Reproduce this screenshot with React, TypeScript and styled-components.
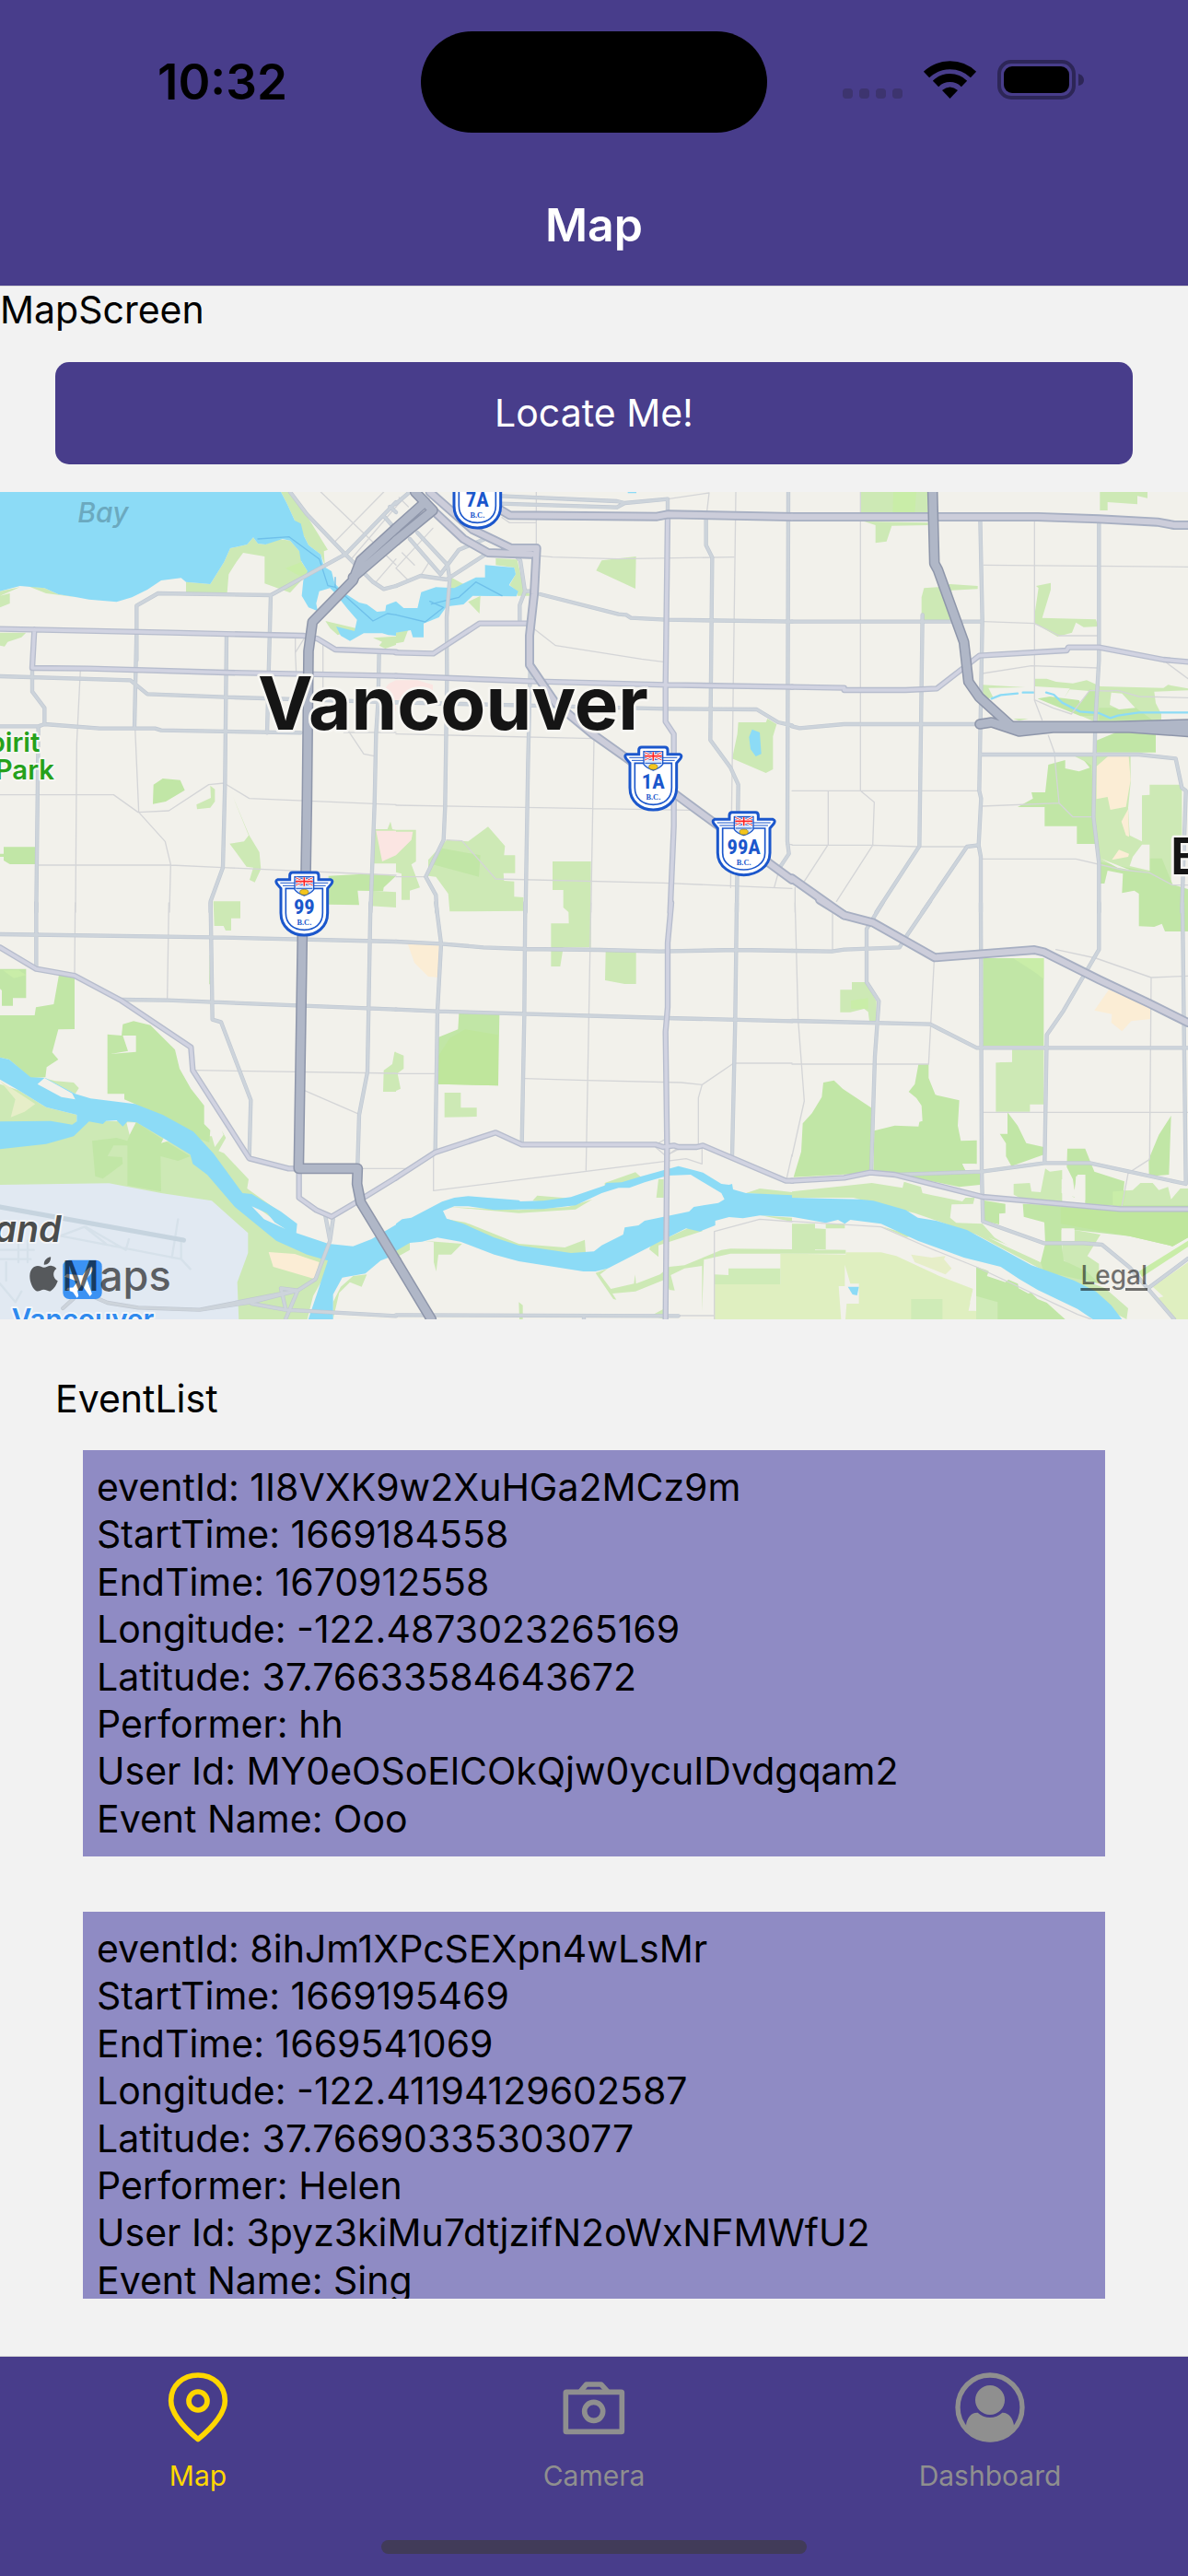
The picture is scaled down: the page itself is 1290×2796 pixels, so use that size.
import React from 'react';
import styled, { createGlobalStyle } from 'styled-components';

const color = {
  primary: '#483d8b',
  background: '#f2f2f2',
  card: '#8f8bc4',
  active: '#ffd700',
  inactive: '#8f8f8f',
  hairline: '#d8d8d8',
};

const GlobalStyle = createGlobalStyle`
  *, *::before, *::after { box-sizing: border-box; }
  html, body { margin: 0; padding: 0; background: ${color.background}; }
  body { font-family: Inter, Roboto, "Liberation Sans", sans-serif; color: #000; }
  h1, h2, p, dl, dd, dt, ul { margin: 0; padding: 0; font-weight: 400; }
`;

/* ---------- shell ---------- */

const Screen = styled.div`
  display: flex;
  flex-direction: column;
  height: 100vh;
  min-height: 2000px;
  overflow: hidden;
  font-size: 41px;
  line-height: 51px;
`;

const Header = styled.header`
  background: ${color.primary};
  border-bottom: 1px solid ${color.hairline};
`;

const StatusBar = styled.div`
  display: grid;
  grid-template-columns: 1fr auto 1fr;
  align-items: center;
  height: 177px;
  padding: 34px 112px 33px;
`;

const Clock = styled.time`
  padding-left: 59px;
  font-size: 53px;
  font-weight: 600;
`;

const Island = styled.div`
  width: 376px;
  height: 110px;
  border-radius: 55px;
  background: #000;
`;

const StatusIcons = styled.svg`
  justify-self: end;
  width: 263px;
  height: 44px;
  margin-bottom: 4px;
`;

const TitleBar = styled.div`
  display: flex;
  align-items: center;
  justify-content: center;
  height: 133px;
  color: #fff;
`;

const Title = styled.h1`
  && { font-size: 50px; font-weight: 600; line-height: 60px; }
`;

const Main = styled.main`
  display: flex;
  flex: 1;
  flex-direction: column;
  min-height: 0;
`;

const LocateButton = styled.button`
  margin: 31px 60px 30px;
  padding: 30px;
  border: 0;
  border-radius: 15px;
  background: ${color.primary};
  color: #fff;
  font: inherit;
`;

/* ---------- map ---------- */

const MapFrame = styled.section`
  position: relative;
  width: 100%;
  aspect-ratio: 1290 / 898;
  flex-shrink: 0;
  overflow: hidden;
`;

const MapDrawing = styled.svg`
  display: block;
  width: 100%;
  height: 100%;
`;

const Attribution = styled.div`
  position: absolute;
  right: 44px;
  bottom: 22px;
  left: 32px;
  display: flex;
  align-items: center;
  justify-content: space-between;
  color: rgba(0, 0, 0, 0.62);
`;

const MapsBrand = styled.span`
  display: flex;
  align-items: center;
  gap: 4px;
  font-size: 45px;
  font-weight: 500;
`;

const AppleMark = styled.svg`
  width: 31px;
  height: 38px;
  margin-bottom: 4px;
`;

const LegalLink = styled.a`
  color: rgba(0, 0, 0, 0.55);
  font-size: 28px;
  font-weight: 500;
  text-decoration: underline;
  text-decoration-thickness: 3px;
  text-underline-offset: 4px;
`;

type TileKey = 'a' | 'b' | 'c' | 'd' | 'e' | 'f';

const tileOrigin: Record<TileKey, [number, number]> = {
  a: [0, 0],
  b: [1290, 0],
  c: [2580, 0],
  d: [0, 1350],
  e: [1290, 1350],
  f: [2580, 1350],
};

type Shapes = Partial<Record<TileKey, string>>;

const lightGreen: Shapes = {
  a: 'M825,160 L840,180 L865,183 L905,165 L945,170 L980,210 L982,240 L1005,275 L945,340 L862,310 L862,222 L792,210 L770,240 L745,280 L740,340 L606,340 L606,305 L685,312 L730,240 L750,195 L805,183Z M915,12 L945,12 L1000,90 L1068,200 L1055,205 L1058,250 L1045,215 L1005,185 L990,155 L975,130 L960,105 L935,50Z M0,335 L65,322 L0,350Z M0,350 L32,342 V375 L0,388Z M90,318 L145,325 L190,345 L250,355 L150,342Z M0,470 L85,470 L70,485 L25,500 L15,515 L0,512Z M1060,432 L1158,455 V468 L1130,468 L1100,478 L1075,455Z M1215,487 L1290,482 V510 L1255,522 L1235,512 L1245,500Z M640,1030 L687,1008 L685,968 L700,980 V1020 L685,1040 L642,1045Z M757,1000 L812,1130 L845,1185 L850,1240 L830,1283 L813,1275 L825,1235 L803,1232 L748,1157 L795,1150 L810,1130Z M1220,1110 L1262,1110 L1272,1085 L1278,1110 L1290,1112 V1222 H1215Z M695,1345 H783 V1400 H753 V1440 H735 L728,1425 H698Z M1205,1310 L1290,1315 V1365 L1205,1360Z',
  b: 'M325,228 L395,232 L410,300 L438,350 H395 V335 L370,315 L390,280 L385,258 L325,250Z M180,290 L220,312 L180,335Z M235,370 L275,350 L272,408Z M0,470 L40,460 L25,500 L0,505Z M652,268 L670,235 L782,222 L780,327Z M1115,762 H1205 L1210,750 L1240,768 L1228,808 V915 L1205,927 L1095,880 L1112,800Z M235,1150 L300,1102 L355,1165 L352,1195 H388 V1253 H350 L352,1278 L385,1280 V1330 L415,1332 V1376 L175,1378 L170,1320 L130,1265 L105,1262 L105,1210 L165,1145Z M510,1215 H635 V1495 H545 L535,1557 H505 V1417 H563 L562,1380 L545,1365 V1308 H510Z M0,1112 H65 V1215 L50,1225 L78,1300 L45,1310 V1340 H18 V1255 L0,1250Z',
  c: 'M225,12 H443 V80 H223Z M235,108 L443,112 V120 L325,122 L308,173 L272,178 V120Z M1003,12 H1158 V32 L1125,25 V52 L1028,45 V72 H1003Z M430,325 L475,322 L515,312 L605,318 V328 L520,332 L520,430 H422 V355Z M795,318 L843,308 V330 L815,422 L990,427 L998,450 L950,452 L925,437 L912,470 L865,483 L792,440 V400 L803,325Z M792,620 L830,620 L860,630 L915,635 L960,625 L1005,645 L1210,650 L1225,640 L1290,652 V658 L1180,662 L1185,700 L1203,735 V760 H985 L940,740 L970,660 L905,655 L885,685 L905,652 L792,645Z M620,640 L760,648 L640,650 L655,680 L620,690Z M920,872 H1103 V960 L1095,1040 L1100,1130 L1140,1150 V1000 L1165,998 V965 H1270 V1140 L1235,1140 V1290 L1000,1220 L975,1080 V900Z M720,750 H770 L740,757Z',
  d: 'M0,590 L60,610 L150,665 L250,690 V720 L290,710 L440,712 L620,780 L680,880 L780,1000 L900,1090 L1075,1140 L1065,1200 L1020,1280 L1000,1360 H0Z M640,760 L690,760 L700,795 L728,755 L722,740 L736,765 L712,808 L730,815 L810,900 L805,930 L965,1045 L960,1080 L780,950Z M1085,1356 V1300 L1110,1250 L1150,1215 L1195,1210 L1178,1250 L1140,1235 L1105,1270Z M1250,545 L1278,525 L1285,485 H1290 V615 H1248Z M683,170 h6 V265 h-8z M150,572 L180,580 L240,585 L257,603 L245,622Z',
  e: 'M683,158 H782 V264 H745 L681,252Z M158,618 H211 V667 H263 V696 L158,698Z M0,487 L25,497 V540 L5,555 L15,605 L0,612Z M680,912 L780,877 L800,895 L680,930Z M445,970 L460,953 L570,962 L500,975Z M170,990 L400,1000 L560,990 L640,965 L585,998 L400,1010Z M165,1030 L225,1040 L400,1110 L550,1122 L615,1097 L618,1140 L400,1140Z M848,960 L855,900 H872 V960Z M1140,945 L1185,930 L1290,942 V955Z M90,1100 L215,1110 L180,1145 H138 L131,1200 L123,1170 V1105Z M0,1130 L45,1105 V1130 L0,1155Z M830,1115 L950,1060 L1000,1068 L855,1115 V1153 L825,1128Z M650,1205 L690,1190 L665,1210 L700,1257 L775,1240 L779,1210 L782,1240 L860,1210 L890,1185 L940,1180 L1060,1130 L1090,1126 L1290,1128 V1142 H1090 L1003,1162 L997,1330 V1182 L940,1190 L895,1212 L908,1262 L890,1260 L880,1225 L780,1265 L705,1272 L718,1292 L708,1290Z M1190,1018 L1290,1025 V1038Z M400,1300 L413,1310 V1356 H402Z M830,1345 L880,1318 V1356Z',
  f: 'M664,520 L717,517 V478 H820 V656 H775 V680 H664Z M157,283 H195 V258 H240 L275,320 V385 H252 L248,355 L235,345 L190,356 H157Z M722,915 L775,912 L780,940 L810,942 L825,865 L840,875 L880,870 V985 L752,965 L722,950Z M1045,940 L1110,935 L1135,912 H1175 L1195,935 L1225,925 L1235,965 L1265,930 H1290 V990 H1045Z M0,940 L260,912 L360,928 L365,908 L420,925 L425,945 L555,972 L565,960 L595,960 L590,980 L520,982 L515,1025 L535,1042 L620,1045 L660,1090 L720,1125 L810,1170 L940,1225 L1020,1255 L1095,1320 L1090,1356 L1060,1340 L900,1240 L600,1080 L400,1010 L200,960 L0,960Z M0,1045 L75,1045 V1128 L175,1130 V1142 H0Z M75,1060 L110,1062 V1130 H75Z M110,1045 L172,1045 V1060 H110Z M290,1053 L400,1085 L372,1088Z M920,1065 L1005,1080 L962,1150 L1000,1175 V1240 L880,1160 V1100 H920Z',
};

const midGreen: Shapes = {
  a: 'M12,1168 H115 V1224 H32 L12,1212 V1200 H0 V1190 H12Z M500,965 L530,945 L587,950 L602,983 L540,1020 L498,1028Z M1070,1262 L1210,1255 L1290,1262 L1250,1300 L1248,1312 L1165,1310 L1170,1357 L1070,1355Z',
  b: 'M120,1225 L150,1172 L275,1195 L270,1265Z',
  c: 'M1055,795 H1185 V860 H990 V822Z M835,900 L890,885 V912 L935,922 L970,910 L950,885 L975,900 L985,1070 L995,1158 H928 V1100 H823 V1038 H735 L785,1010 L780,990 H825Z M1000,1215 L1165,1250 V1205 H1205 L1240,1290 L1290,1305 V1443 H1265 L1215,1443 L1205,1418 L1180,1428 L1130,1426 V1320 L1115,1310 L1075,1318 L1078,1255 L1028,1245 L1018,1287 H1005Z M940,700 L970,655 L995,660 V740 L940,742 L800,685 L840,678 L935,690Z M1000,715 L1120,715 L1175,755 H1000Z',
  d: 'M0,366 H113 L117,340 L175,330 L192,235 H243 V411 L190,412 L170,487 L190,510 L152,535 L148,568 L100,570 L30,510 L0,503Z M0,215 H85 V310 H42 V335 H6 V285 L0,280Z M400,395 L435,385 L490,398 L570,478 L585,540 L622,605 L665,660 V720 L685,740 L682,780 L640,765 L440,655 L405,640 V622 H350 V428 L396,432Z M300,775 L380,765 L415,775 L440,712 L530,770 L620,825 L580,840 L523,825 L525,940 L415,920 V790 L370,790 L350,825 L398,828 L400,850 L335,898 L310,890Z',
  e: 'M205,360 H337 L333,595 L137,590 V438 L202,412Z',
  f: 'M622,180 H820 V465 H622Z M102,585 L137,578 L165,605 L260,668 L255,880 L5,893 L30,810 L35,718 L65,685 L97,632Z M412,525 H445 V570 L467,625 L545,643 L540,725 L550,775 L602,773 V850 H555 L565,870 L612,880 V918 L545,925 L350,885 L265,880 L268,742 L335,725 L412,728 L415,713 L425,710 L422,660 L405,635 L380,615 L400,590Z M702,682 L735,725 L763,782 L820,795 V820 L715,857 L697,825 V783 L677,752 H702Z M1235,693 L1228,885 L1163,890 L1162,835 L1195,755Z M897,800 H955 L985,875 L1083,907 L1075,985 L955,990 V885 L925,890 L920,960 L878,930 V900 H915 L895,860Z M752,980 L870,985 H1290 V1090 L1240,1118 L1100,1085 L920,1065 H878 V1110 L885,1165 L960,1200 L1000,1240 L820,1200 L810,1170 L825,1110 L822,1040 L755,1022Z M622,968 L695,980 V1010 L675,1012 V1047 L622,1035Z M600,1185 L630,1195 L760,1250 L800,1290 L830,1302 L890,1356 H600Z',
};

const deepGreen: Shapes = {
  e: 'M137,500 L175,440 L225,412 L333,430 V595 L137,590Z',
  f: 'M875,992 H1290 V1090 L1240,1118 L1100,1085 L875,1045Z',
};

const brightGreen: Shapes = {
  a: 'M930,260 L982,240 L1005,275 L985,290Z',
  c: 'M330,12 H405 L400,78 H328Z',
  d: 'M10,220 L60,218 L85,235 L45,245Z',
  f: 'M192,318 L248,310 L248,345 L192,345Z M1045,940 L1090,937 L1080,985 H1045Z M1130,1200 L1290,1100 V1120 L1140,1218Z M720,180 H820 V248 L790,225Z',
};

const field: Shapes = {
  e: 'M1038,1242 H1252 V1142 H1290 V1360 H1038Z',
  f: 'M0,1142 L175,1145 V1138 H290 L340,1150 L480,1215 L590,1257 L580,1300 L600,1330 V1356 H0Z M1290,1170 V1356 H1250 L1180,1290 L1210,1282 L1175,1250Z',
};

const fieldPatch: Shapes = {
  e: 'M1038,1210 L1083,1212 V1190 H1252 V1242 H1038Z',
  f: 'M388,1290 H490 V1356 H388Z M600,1280 L670,1300 V1356 H600Z',
};

const clearing: Shapes = {
  c: 'M1100,1230 L1110,1200 L1140,1160 H1165 V1245Z M1040,665 L1075,668 L1118,715 L1065,720 L1035,705Z M1005,1205 L1100,1243 L1060,1235Z',
  d: 'M400,432 H443 V485 L360,492 L417,482Z M412,715 H443 L422,755Z M535,762 L550,775 L525,782Z',
  f: 'M172,1178 L190,1240 H218 V1305 H178 L174,1356 H160 L152,1248 H172Z M878,900 H915 L920,935 L930,885 H955 V968 L878,945Z M590,1257 L600,1260 V1328 H575Z M645,1190 L715,1218 L695,1235 L635,1215Z M735,1232 L795,1262 L770,1272 L738,1255Z M640,1090 L810,1155 V1170 L700,1120Z M555,850 H597 V868 L565,870Z M640,520 L664,520 L664,480 H717 V518Z M878,1060 H920 V1100 H878Z',
};

const sand: Shapes = {
  c: 'M992,905 L1030,872 H1097 L1103,950 L1088,1037 L1037,1047 L1028,1005 L992,1012Z M1073,1085 L1095,1045 L1098,1135 L1088,1130Z M1042,1210 L1065,1177 L1098,1190 L1095,1200Z',
  d: 'M875,1137 L960,1143 L1040,1170 L1025,1225 L890,1185Z',
  e: 'M38,133 H140 V243 L105,240 L60,195Z',
  f: 'M985,350 L1032,283 L1170,340 V378 L1105,385 L1075,418 L1040,390 L1042,362Z',
};

const scrub: Shapes = {
  d: 'M0,580 L50,640 L35,698 L80,680 L115,655Z',
  f: 'M388,1145 L455,1155 L500,1150 L495,1160 L520,1190 L500,1210 L400,1170Z',
};

const hospital: Shapes = {
  a: 'M1225,1115 H1290 V1195 L1245,1215Z M1290,625 L1268,635 L1252,655 L1275,725 H1290Z',
  b: 'M0,1118 H55 L50,1145 L0,1195Z M0,625 H70 L120,640 V680 L0,690Z',
};

const airport: Shapes = {
  d: 'M0,918 L355,913 L525,945 L690,970 L808,1075 V1140 L773,1235 L778,1360 H0Z',
};

const water: Shapes = {
  a: 'M0,12 L915,12 L935,50 L960,105 L980,115 L990,155 L1005,185 L1045,215 L1055,255 L1080,270 L1090,310 L1120,340 L1170,372 L1195,378 L1228,402 L1255,400 L1258,380 L1290,368 V480 L1265,478 L1245,472 L1185,472 L1140,497 L1110,480 L1095,450 L1155,465 L1163,428 L1130,390 L1090,340 L1075,325 L1040,335 L1030,375 L1035,400 L1005,388 L983,350 L988,300 L1002,270 L980,235 L975,205 L945,170 L920,165 L865,183 L840,180 L825,160 L805,183 L750,195 L730,240 L685,312 L606,305 L590,292 L525,300 L480,330 L430,355 L380,370 L290,362 L250,355 L190,345 L145,325 L65,318 L0,335Z',
  b: 'M0,368 L25,390 L70,390 L82,338 L130,322 L190,325 L220,310 L260,290 L290,290 V250 L385,258 L390,280 L368,315 L398,335 L392,352 L250,350 L220,378 L165,385 L140,420 L90,440 V485 H55 L48,462 L0,470Z M755,12 h28 v4 h-28Z M1160,785 L1185,795 L1190,865 L1172,873 L1155,850 L1150,810Z',
  d: 'M0,503 L30,510 L100,568 L148,570 L245,622 L295,637 L440,655 L530,690 L630,745 L695,815 L790,945 L820,948 L915,1005 L968,1045 L965,1075 L1070,1110 L1150,1118 L1210,1095 L1290,1048 V1145 L1240,1165 L1190,1207 L1115,1220 L1085,1275 V1360 H1003 L1030,1280 L1068,1165 L1000,1145 L900,1100 L765,990 L675,885 L628,850 L620,820 L530,765 L445,715 L415,712 L400,728 L380,708 L345,710 L335,720 L290,712 L240,760 L150,785 L0,802 V712 L165,710 L235,722 L250,712 V690 L150,665 L60,610 L0,575Z M122,590 L145,570 L235,620 L245,640 L200,632Z M820,988 L870,1010 L895,1040 L930,1062 L860,1030Z',
  e: 'M0,1045 L20,1030 L50,1025 L150,973 L190,960 L235,955 L400,968 L405,972 L480,970 L570,958 L680,920 L685,912 L735,910 L800,890 L920,857 L1000,878 L1060,915 L1085,918 L1095,915 L1098,933 L1140,945 L1290,952 V1022 L1185,1018 L1130,1027 L1085,1023 L1040,1035 V1050 L990,1070 L945,1060 L885,1090 L830,1118 L690,1190 L650,1200 H610 L400,1167 L320,1145 L210,1103 L135,1090 L85,1103 L45,1107 L0,1133Z M153,1003 L190,988 L235,988 L320,1000 L480,997 L585,985 L670,945 L725,928 L760,928 L810,910 L885,888 L960,885 L1060,945 L1070,965 L1050,977 L970,990 L955,1005 L810,1035 L790,1050 L745,1057 L740,1080 L670,1115 L645,1135 L570,1140 L400,1115 L320,1090 L220,1045 L165,1028Z',
  f: 'M0,960 L220,965 L265,970 L370,1000 L410,1025 L470,1035 L570,1065 L680,1125 L780,1180 L920,1230 L990,1265 L1040,1310 L1075,1356 H980 L930,1322 L800,1260 L740,1225 L680,1185 L560,1155 L410,1100 L290,1045 L190,1032 L172,1045 L150,1032 L110,1042 L0,1022Z M182,1250 H218 L212,1278 L197,1275Z',
};

const creek: Shapes = {
  c: 'M650,685 L680,673 L735,668 M752,665 H787 M828,665 L853,672 L880,698 L938,727 L1000,732 L1037,748 L1062,740 L1130,730 H1290',
};

const ferry: Shapes = {
  a: 'M840,165 L942,158 L1040,230 L1068,317 L1092,322 L1215,432 L1262,408 L1290,412 M1092,322 V290',
  b: 'M0,412 L95,435 L155,388 L110,368 M115,377 L205,355 L260,305 L345,350',
};

const runway: Shapes = { d: 'M0,990 L598,1098' };

const taxiway: Shapes = {
  d: 'M195,1085 L275,1055 L345,1110 M280,1055 L410,1130 L420,1095 M200,1085 L590,1160 L620,1192 M580,1030 L560,1155 M590,1100 V1160 M0,1130 H110 M0,1160 H100 M60,1110 V1170 M90,1100 V1170 M0,1240 L50,1300 L70,1265 M20,1170 V1230',
};

const path: Shapes = {
  a: 'M262,590 L250,830 L246,1380 M440,780 L452,1055 L538,1150 L556,1225 L552,1380 M0,998 H370 L450,1055 L550,1050 L680,965 L730,960 L812,1010 L1290,1030 M118,1227 H556 L726,1235 L1290,1260 M1045,12 L1230,190 M1250,12 L1090,175 M1290,60 L1140,235 M1255,215 L1290,250 M1225,305 L1290,230 M1120,795 H1290 M1135,790 L1185,865 L1220,872 M962,490 V535 L965,600 M990,490 L962,535 M1052,510 V690',
  b: 'M457,12 V190 M345,95 L370,112 H455 M470,220 L510,224 L720,230 L1100,224 M1107,12 L1090,1300 M1020,15 L885,35 M1020,15 L1010,100 M440,450 L520,512 L800,556 L870,565 M0,800 L645,815 L635,1380 M0,1032 L960,1048 M0,1265 H97 M165,1145 L215,1148 L325,1272 L870,1285 L1290,1303 M1290,1160 H1272 M1250,1235 L1232,1300 M0,60 L45,12 M10,30 L40,60 M0,260 L120,130 M0,260 L40,300 M80,285 L105,245 M20,210 L60,250',
  c: 'M223,12 V985 L268,1022 L263,1162 L145,1345 M0,985 H610 M118,985 V1160 L40,1280 M0,1162 H260 L412,1167 L570,1167 M790,108 V690 L815,755 M835,805 L855,860 L858,900 L870,1025 L915,1070 H975 M625,250 L1290,256 M625,434 L790,440 L870,480 H995 M620,603 L780,578 L998,585 M793,690 L850,715 L910,735 L970,658 L1030,660 L1060,658 L1130,678 L1290,682 M620,1035 L870,1025 M620,1207 H925 L1075,1242 L1165,1252 L1240,1292 H1290 M1220,568 L1290,620 M10,1300 V1380',
  d: 'M245,0 L243,230 M550,0 L545,310 M635,545 L1290,555 M990,610 L1170,688 M1170,865 H1290',
  e: 'M635,0 L619,870 M420,572 L620,578 L930,585 L997,592 L1100,522 L1290,522 M997,592 L985,635 V785 M0,556 H128 M122,820 V937 L945,833 L997,850 V790 M1290,820 L1272,900 M1037,1356 V1070 L1185,1030 L1290,1038 M890,1344 H1037 M845,795 L880,825 L915,800 M850,785 L880,768 M885,820 L925,800 M0,865 H40',
  f: 'M10,0 L20,380 L40,645 L0,825 M132,30 V155 M463,190 L445,525 H0 M860,152 L990,180 L1170,243 L1290,238 M1170,243 L1165,835 L1095,880 L1075,985 M620,682 H1290 M0,1037 L290,1055 L450,1125 L600,1185 L930,1340 L975,1356',
};

const street: Shapes = {
  a: 'M0,612 L425,625 L480,670 L733,680 L1290,697 M105,585 V662 L145,715 V768 M0,775 H125 L145,768 L325,782 H505 L525,788 L980,796 M125,775 L118,1380 M445,560 V382 L515,342 L882,348 L1125,215 L1290,45 M445,460 L438,780 M882,348 L870,796 M738,475 L733,960 L726,1235 L686,1345 V1380 M945,12 L1000,85 L1125,215 L1215,305 L1250,328 L1290,318 M1235,535 L1232,690 L1225,800 L1220,1030 L1207,1380 M1250,90 L1290,135 M1270,60 L1290,78',
  b: 'M340,25 L720,42 L745,48 L885,35 V90 M340,50 L720,62 L745,48 M1278,12 L1275,1150 L1280,1190 L1250,1235 M1010,100 V185 L1030,225 L1024,820 L1090,910 L1115,965 L1110,1380 M470,345 L725,410 L750,412 L765,422 L880,428 L1290,434 M0,318 L80,285 L165,297 L300,210 M45,165 L145,280 L205,200 L290,165 M70,145 L168,250 L175,297 L165,420 L166,615 L160,1035 L155,1145 L97,1265 L130,1325 L133,1380 M390,220 L405,235 L420,335 L403,380 V435 M420,335 H450 M438,560 L430,900 L422,1380 M0,697 L880,718 L1175,720 L1245,762 L1290,772 M0,50 L45,12',
  c: 'M0,434 H620 M425,412 L415,1165 L275,1380 M0,775 L25,781 L170,768 H605 M613,95 L620,430 L610,985 L616,1010 L608,1162 L615,1200 V1380 M608,1162 L570,1167 L425,1380 M1000,105 V560 L988,760 L982,1070 L1000,1220 V1380 M615,867 H1130 L1250,880 L1270,975 L1283,985 L1270,1380',
  d: 'M0,102 L690,112 L1290,126 M118,0 V215 M395,315 L545,317 L1290,347 M686,0 L692,380 L720,388 L817,642 L812,830 M1207,0 L1197,550 L1170,690 L1165,850 M310,1285 L350,1302 L450,1318 L650,1325 L820,1300 L970,1262 L1028,1225 L1075,1100 L1085,1030 M650,1325 L970,1262 M820,1305 L930,1325 L1290,1345 M915,1255 L930,1320 M915,1255 L970,1262 L930,1356 M1060,1020 L1075,1100 M205,1320 L240,1288',
  e: 'M0,126 L145,133 L285,145 L420,150 L665,153 L860,158 L1110,153 L1290,156 M0,347 L135,353 L880,375 L1290,385 M130,0 L147,133 L135,353 L128,810 M421,0 L418,365 L410,785 M1110,0 L1105,380 L1095,825 M0,1342 L920,1345 M612,1345 V1356',
  f: 'M0,156 L130,158 L170,152 L350,145 L375,105 L450,-5 M295,0 L243,85 V258 L283,320 L270,500 L258,875 M0,384 L450,395 L602,472 H1290 M615,0 L618,870 L622,1037 L820,1108 H950 L1010,1113 L1100,1187 L1245,1356 M1160,1255 L1290,1158 M1000,0 V152 L885,350 L830,430 L823,845 M1272,0 L1283,915 M340,885 L618,875 L823,847 H970 L1283,915',
};

const avenue: Shapes = {
  a: 'M0,458 L555,470 L990,480 L1035,490 L1092,525 L1290,533 M112,460 L105,585 L290,587 L735,600 L1290,611',
  b: 'M0,535 L122,538 L272,440 H440 M0,611 L435,628 L880,640 L1290,647 M885,90 L878,640 V760 L905,800 V1000 L905,1100 L893,1380',
  c: 'M0,647 L170,650 V657 L370,657 L472,652 L610,545 L895,528 L900,518 H1000 L1210,558 L1290,565',
  d: 'M0,145 L118,215 L243,237 L395,318 L622,470 L628,545 L812,832 L940,865 H965 M974,870 V960 L1030,1000 L1080,1022 L1160,975 L1290,895',
  e: 'M0,895 L128,812 L325,748 L410,787 H845 L870,795 L905,790 L920,795 H980 L1000,790 L1270,905 H1290 M897,0 L885,130 V340 L878,420 L883,790 L878,1356',
  f: 'M0,905 L170,895 L255,878 L335,885 L620,957 L1070,997 H1290',
};

const highway: Shapes = {
  b: 'M340,70 L370,88 L850,92 L885,85 L1290,93 M110,62 L220,165 L300,210 L440,215 M110,12 L250,135 L375,195 H458 L450,345 L435,480 V575 L520,700 L640,800 L760,885 L915,1000 L1290,1275',
  c: 'M0,93 H800 L1000,100 L1190,110 L1245,120 H1290 M0,1270 L170,1390',
  f: 'M90,-10 L170,40 L265,65 L465,178 L790,153 L820,160 L1000,250 L1165,328 L1290,390',
};

const freeway: Shapes = {
  a: 'M1290,130 L1175,235 L1150,300 L1018,435 L1005,530 L1000,1020 L994,1380 M1290,170 L1150,290',
  b: 'M0,130 L95,45 L62,12 M0,170 L120,72 L62,12',
  c: 'M458,12 L464,245 L475,265 L560,500 L575,630 L610,680 L715,775 L1050,775 L1290,768 M612,768 L650,762 L740,792 L850,780 L1100,780 L1290,793',
  d: 'M994,0 L985,105 L973,865 H1165 L1163,915 L1175,975 L1290,1165',
  e: 'M0,1165 L115,1356',
};

const Areas = ({ shapes, fill }: { shapes: Shapes; fill: string }) => (
  <g fill={fill} fillRule="evenodd">
    {(Object.keys(shapes) as TileKey[]).map((key) => (
      <path key={key} d={shapes[key]} transform={`translate(${tileOrigin[key].join(' ')})`} />
    ))}
  </g>
);

const Lines = ({ shapes, stroke, width }: { shapes: Shapes; stroke: string; width: number }) => (
  <g fill="none" stroke={stroke} strokeWidth={width} strokeLinecap="round" strokeLinejoin="round">
    {(Object.keys(shapes) as TileKey[]).map((key) => (
      <path key={key} d={shapes[key]} transform={`translate(${tileOrigin[key].join(' ')})`} />
    ))}
  </g>
);

const Shield = ({ x, y, label, wide }: { x: number; y: number; label: string; wide?: boolean }) => {
  const blue = '#1b57cc';
  const w = wide ? 87 : 78;
  return (
    <g transform={`translate(${x} ${y})`}>
      <path
        d={`M-38,4 H38 Q47,4 47,14 V27 H${w + 8} Q${w + 18},30 ${w + 10},42 L${w - 2},56 V136 C${w - 2},182 40,208 0,208 C-40,208 -${w - 2},182 -${w - 2},136 V56 L-${w + 10},42 Q-${w + 18},30 -${w + 8},27 H-47 V14 Q-47,4 -38,4Z`}
        fill="#fff"
        stroke={blue}
        strokeWidth="9"
      />
      <path d={`M-${w},38 H${w} M-${w - 8},47 H${w - 8}`} stroke={blue} strokeWidth="3" />
      <path
        d={`M-${w - 18},56 H${w - 18} V136 C${w - 18},172 34,191 0,191 C-34,191 -${w - 18},172 -${w - 18},136Z`}
        fill="#fff"
        stroke={blue}
        strokeWidth="5"
      />
      <path d="M-31,18 H31 V60 Q22,72 0,79 Q-22,72 -31,60Z" fill="#dbe8fb" stroke={blue} strokeWidth="4" />
      <path d="M-28,21 H28 V46 H-28Z" fill="#4a6fc9" />
      <path d="M-28,21 L28,46 M28,21 L-28,46" stroke="#fff" strokeWidth="8" />
      <path d="M-28,21 L28,46 M28,21 L-28,46" stroke="#f03a3a" strokeWidth="3" />
      <path d="M0,20 V48 M-28,33 H28" stroke="#fff" strokeWidth="10" />
      <path d="M0,20 V48 M-28,33 H28" stroke="#f22" strokeWidth="5" />
      <path d="M-27,56 H27" stroke={blue} strokeWidth="3" />
      <ellipse cx="0" cy="68" rx="14" ry="9" fill="#f4c51c" stroke="#8a7a2a" strokeWidth="2" />
      <text
        y="139"
        textAnchor="middle"
        fill={blue}
        fontFamily="'Liberation Sans Narrow', 'Roboto Condensed', Roboto, sans-serif"
        fontWeight="700"
        fontSize="68"
      >
        {label}
      </text>
      <text y="175" textAnchor="middle" fill={blue} fontFamily="'Liberation Serif', serif" fontWeight="700" fontSize="25">
        B.C.
      </text>
    </g>
  );
};

const VancouverMap = () => (
  <MapDrawing viewBox="0 12 3870 2694" preserveAspectRatio="xMidYMid slice" role="img" aria-label="Map of Vancouver">
    <rect y="12" width="3870" height="2694" fill="#f2f1eb" />
    <Areas shapes={lightGreen} fill="#cde9b5" />
    <Areas shapes={midGreen} fill="#c1e6a6" />
    <Areas shapes={deepGreen} fill="#bfe69c" />
    <Areas shapes={brightGreen} fill="#c9eda8" />
    <Areas shapes={field} fill="#dfefc0" />
    <Areas shapes={fieldPatch} fill="#cfebb7" />
    <Areas shapes={clearing} fill="#f2f1eb" />
    <Areas shapes={sand} fill="#fbedd5" />
    <Areas shapes={scrub} fill="#e6eec8" />
    <Areas shapes={hospital} fill="#fbe5e2" />
    <Areas shapes={airport} fill="#e1e9f2" />
    <Lines shapes={taxiway} stroke="#d6e1ea" width={7} />
    <Lines shapes={runway} stroke="#c6d4df" width={16} />
    <Areas shapes={water} fill="#8cdbf6" />
    <Lines shapes={creek} stroke="#8cdbf6" width={7} />
    <Lines shapes={ferry} stroke="#6fc0ea" width={4} />
    <Lines shapes={path} stroke="#d4d5d7" width={4} />
    <Lines shapes={street} stroke="#c0c8d2" width={13} />
    <Lines shapes={street} stroke="#cdd4db" width={9} />
    <Lines shapes={avenue} stroke="#b7bdcd" width={19} />
    <Lines shapes={avenue} stroke="#d1d3e1" width={11} />
    <Lines shapes={highway} stroke="#a7afc2" width={30} />
    <Lines shapes={highway} stroke="#cccdda" width={19} />
    <Lines shapes={freeway} stroke="#8e96aa" width={35} />
    <Lines shapes={freeway} stroke="#b0b7c7" width={26} />
    <g fontFamily="Inter, sans-serif" paintOrder="stroke" strokeLinejoin="round">
      <text x="253" y="110" fontSize="90" fontStyle="italic" fontWeight="500" fill="#6ba9bf">
        Bay
      </text>
      <text x="840" y="785" fontSize="240" fontWeight="700" fill="#151515" stroke="#f7f6f2" strokeWidth="16">
        Vancouver
      </text>
      <g fontSize="88" fontWeight="600" fill="#25a11b" stroke="#f7f6f2" strokeWidth="12" textAnchor="end">
        <text x="130" y="857">Spirit</text>
        <text x="177" y="948">Park</text>
      </g>
      <text x="3812" y="1257" fontSize="165" fontWeight="600" fill="#151515" stroke="#f7f6f2" strokeWidth="14">
        Burnaby
      </text>
      <text x="200" y="2453" fontSize="118" fontStyle="italic" fontWeight="600" fill="#4b4d4c" stroke="#f2f4f6" strokeWidth="12" textAnchor="end">
        Island
      </text>
      <rect x="205" y="2513" width="127" height="127" rx="20" fill="#3b92f3" />
      <path
        d="M0,-56 C7,-56 9,-46 9,-38 V-16 L52,12 V23 L9,10 V34 L22,45 V53 L0,46 L-22,53 V45 L-9,34 V10 L-52,23 V12 L-9,-16 V-38 C-9,-46 -7,-56 0,-56Z"
        fill="#fff"
        transform="translate(266 2581) rotate(38)"
      />
      <text x="38" y="2736" fontSize="89" fontWeight="600" fill="#2f8aee" stroke="#f2f6fa" strokeWidth="12">
        Vancouver
      </text>
    </g>
    <Shield x={991} y={1247} label="99" />
    <Shield x={1555} y={-79} label="7A" />
    <Shield x={2128} y={839} label="1A" />
    <Shield x={2423} y={1051} label="99A" wide />
  </MapDrawing>
);

/* ---------- event list ---------- */

const EventSection = styled.section`
  display: flex;
  flex: 1;
  flex-direction: column;
  min-height: 0;
  padding: 61px 60px 62px;
`;

const SectionTitle = styled.h2`
  && { margin-bottom: 30px; font-size: 41px; }
`;

const EventItems = styled.ul`
  display: flex;
  flex: 1;
  flex-direction: column;
  gap: 60px;
  min-height: 0;
  margin: 0 30px;
  overflow: hidden;
  list-style: none;
`;

const EventCard = styled.li`
  display: grid;
  flex-shrink: 0;
  grid-auto-rows: 1fr;
  min-height: 441px;
  padding: 15px;
  background: ${color.card};
`;

interface EventInfo {
  id: string;
  start: string;
  end: string;
  longitude: string;
  latitude: string;
  performer: string;
  user: string;
  name: string;
}

const events: EventInfo[] = [
  {
    id: '1I8VXK9w2XuHGa2MCz9m',
    start: '1669184558',
    end: '1670912558',
    longitude: '-122.4873023265169',
    latitude: '37.76633584643672',
    performer: 'hh',
    user: 'MY0eOSoElCOkQjw0ycuIDvdgqam2',
    name: 'Ooo',
  },
  {
    id: '8ihJm1XPcSEXpn4wLsMr',
    start: '1669195469',
    end: '1669541069',
    longitude: '-122.41194129602587',
    latitude: '37.76690335303077',
    performer: 'Helen',
    user: '3pyz3kiMu7dtjzifN2oWxNFMWfU2',
    name: 'Sing',
  },
];

const EventEntry = ({ event }: { event: EventInfo }) => (
  <EventCard>
    <p>eventId: {event.id}</p>
    <p>StartTime: {event.start}</p>
    <p>EndTime: {event.end}</p>
    <p>Longitude: {event.longitude}</p>
    <p>Latitude: {event.latitude}</p>
    <p>Performer: {event.performer}</p>
    <p>User Id: {event.user}</p>
    <p>Event Name: {event.name}</p>
  </EventCard>
);

/* ---------- tab bar ---------- */

const TabBar = styled.footer`
  display: flex;
  flex-direction: column;
  align-items: center;
  justify-content: space-between;
  height: 239px;
  padding: 13px 0 24px;
  border-top: 1px solid ${color.hairline};
  background: ${color.primary};
`;

const Tabs = styled.nav`
  display: grid;
  grid-template-columns: repeat(3, 1fr);
  width: 100%;
`;

const Tab = styled.button<{ $active?: boolean }>`
  display: flex;
  flex-direction: column;
  align-items: center;
  gap: 14px;
  padding: 0;
  border: 0;
  background: none;
  color: ${(p) => (p.$active ? color.active : color.inactive)};
  font: inherit;
  font-size: 30px;
  line-height: 36px;
`;

const TabIcon = styled.svg`
  width: 84px;
  height: 84px;
`;

const HomeIndicator = styled.div`
  width: 462px;
  height: 15px;
  border-radius: 8px;
  background: #413b59;
`;

const PinIcon = () => (
  <TabIcon viewBox="0 0 252 252" fill="none" stroke="currentColor" strokeWidth="17" aria-hidden>
    <path d="M126,230 C88,198 38,150 38,104 C38,55 77,21 126,21 S214,55 214,104 C214,150 164,198 126,230Z" strokeLinejoin="round" />
    <circle cx="126" cy="105" r="30" />
  </TabIcon>
);

const CameraIcon = () => (
  <TabIcon viewBox="0 0 252 252" fill="none" stroke="currentColor" strokeWidth="17" strokeLinejoin="round" aria-hidden>
    <rect x="34" y="76" width="183" height="129" rx="2" />
    <path d="M82,74 L101,51 H149 L170,74" />
    <circle cx="125" cy="139" r="30" />
  </TabIcon>
);

const PersonIcon = () => (
  <TabIcon viewBox="0 0 252 252" fill="currentColor" aria-hidden>
    <circle cx="126" cy="126" r="105" fill="none" stroke="currentColor" strokeWidth="16" />
    <circle cx="126" cy="102" r="48" />
    <path d="M48,184 C51,160 64,142 86,143 C108,164 144,164 166,143 C188,142 201,162 204,184 L200,200 C180,228 154,238 126,238 C98,238 72,228 52,200Z" />
  </TabIcon>
);

export default function App() {
  return (
    <Screen>
      <GlobalStyle />
      <Header>
        <StatusBar>
          <Clock>10:32</Clock>
          <Island />
          <StatusIcons viewBox="0 0 263 44" aria-hidden>
            <g fill="#3d346f">
              <rect x="0" y="31" width="11" height="11" rx="4" />
              <rect x="18" y="31" width="11" height="11" rx="4" />
              <rect x="36" y="31" width="11" height="11" rx="4" />
              <rect x="54" y="31" width="11" height="11" rx="4" />
            </g>
            <g fill="none" stroke="#000" strokeWidth="9">
              <path d="M91,16 A37,37 0 0 1 142,16" />
              <path d="M101,26 A22,22 0 0 1 132,26" />
            </g>
            <path d="M108,33 Q116.500,26 125,33 L116.500,42Z" />
            <rect x="170" y="2" width="81" height="39" rx="13" fill="none" stroke="#2d2657" strokeWidth="4" />
            <rect x="175" y="7" width="71" height="29" rx="9" />
            <path d="M256,15 Q262,17 262,22 T256,28Z" fill="#2d2657" />
          </StatusIcons>
        </StatusBar>
        <TitleBar>
          <Title>Map</Title>
        </TitleBar>
      </Header>
      <Main>
        <p>MapScreen</p>
        <LocateButton type="button">Locate Me!</LocateButton>
        <MapFrame>
          <VancouverMap />
          <Attribution>
            <MapsBrand>
              <AppleMark viewBox="95 1150 94 114" aria-hidden fill="currentColor">
                <path d="M165,1150 C167,1164 156,1177 143,1176 C141,1163 153,1151 165,1150Z M184,1189 C170,1198 171,1222 188,1229 C184,1242 175,1257 165,1262 C156,1265 151,1258 142,1258 C133,1258 127,1265 119,1263 C105,1257 95,1230 96,1211 C97,1192 109,1180 122,1180 C131,1180 136,1185 143,1185 C150,1185 156,1179 166,1179 C173,1180 180,1183 184,1189Z" />
              </AppleMark>
              Maps
            </MapsBrand>
            <LegalLink href="#legal">Legal</LegalLink>
          </Attribution>
        </MapFrame>
        <EventSection>
          <SectionTitle>EventList</SectionTitle>
          <EventItems>
            {events.map((event) => (
              <EventEntry key={event.id} event={event} />
            ))}
          </EventItems>
        </EventSection>
      </Main>
      <TabBar>
        <Tabs>
          <Tab type="button" $active>
            <PinIcon />
            Map
          </Tab>
          <Tab type="button">
            <CameraIcon />
            Camera
          </Tab>
          <Tab type="button">
            <PersonIcon />
            Dashboard
          </Tab>
        </Tabs>
        <HomeIndicator />
      </TabBar>
    </Screen>
  );
}
